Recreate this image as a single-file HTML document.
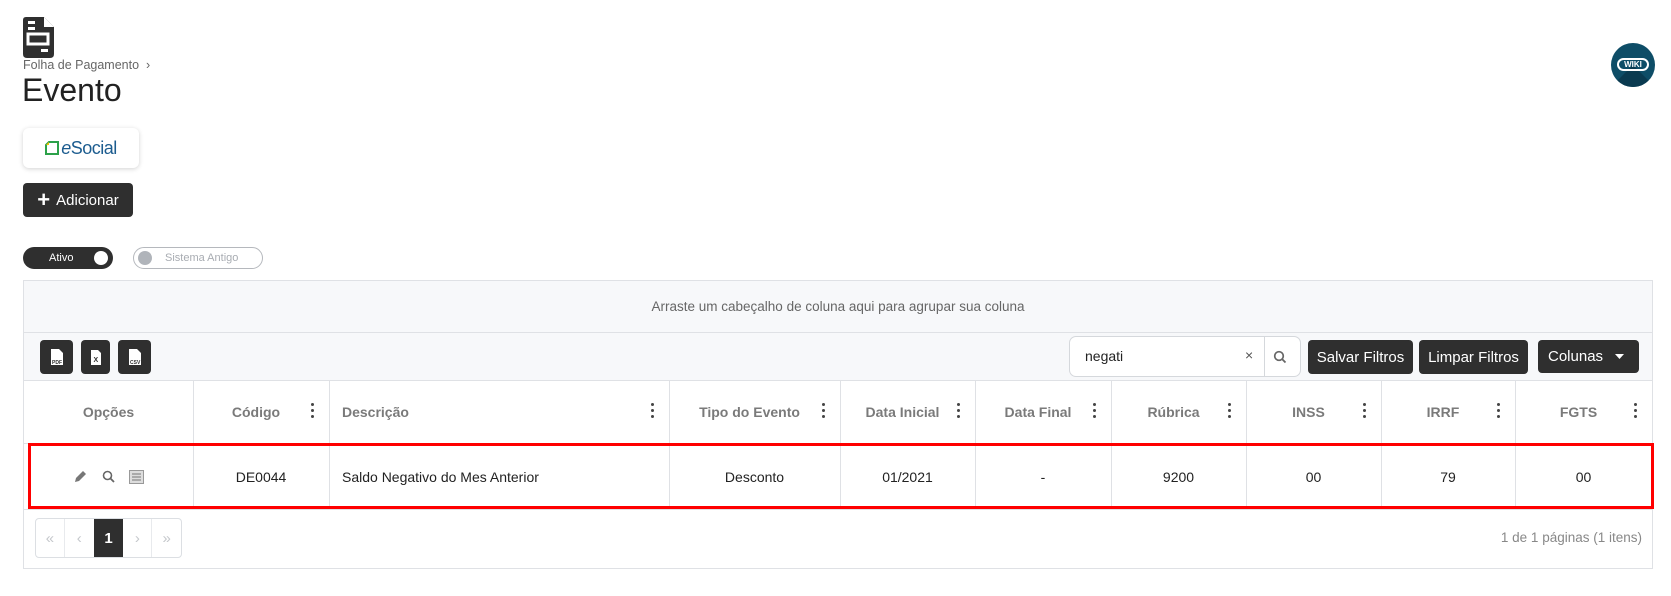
<!DOCTYPE html>
<html><head><meta charset="utf-8"><style>
*{box-sizing:border-box;margin:0;padding:0}
body{width:1671px;height:596px;background:#fff;font-family:"Liberation Sans",Arial,sans-serif;position:relative;overflow:hidden;color:#222}
.abs{position:absolute}
.btn{position:absolute;background:#2f2f2f;color:#fff;border-radius:4px;font-size:15px;display:flex;align-items:center;justify-content:center}
.grid{position:absolute;left:23px;top:280px;width:1630px;height:289px;border:1px solid #dfe1e5}
.hline{position:absolute;left:0;right:0;height:1px;background:#dfe1e5}
.vline{position:absolute;width:1px;background:#dfe1e5;top:99px;height:130px}
.hd{position:absolute;top:100px;height:62px;display:flex;align-items:center;font-size:14px;font-weight:bold;color:#7a7a7a}
.kb{position:absolute;right:14px;top:22px;width:4px;height:16px}
.kb i{display:block;width:3px;height:3px;background:#444;border-radius:50%;margin:0 0 3px 0}
.dc{position:absolute;top:163px;height:65px;display:flex;align-items:center;justify-content:center;font-size:14px;color:#222}
</style></head><body>
<!-- doc icon -->
<svg class="abs" style="left:23px;top:17px" width="31" height="41" viewBox="0 0 31 41">
<path d="M3 0H21L31 10V37Q31 41 27 41H4Q0 41 0 37V3Q0 0 3 0Z" fill="#2f2f2f"/>
<path d="M21 0V10H31Z" fill="#fff"/>
<rect x="5" y="4" width="7" height="3" fill="#fff"/><rect x="5" y="10" width="7" height="3" fill="#fff"/>
<rect x="5" y="17" width="20" height="10" fill="none" stroke="#fff" stroke-width="3"/>
<rect x="18" y="32" width="7" height="3" fill="#fff"/>
</svg>
<div class="abs" style="left:23px;top:58px;font-size:12.5px;color:#666">Folha de Pagamento &nbsp;›</div>
<div class="abs" style="left:22px;top:72px;font-size:32px;color:#222">Evento</div>
<!-- wiki -->
<div class="abs" style="left:1611px;top:43px;width:44px;height:44px;border-radius:50%;background:#0e4d67;overflow:hidden">
<div class="abs" style="left:22px;top:22px;width:40px;height:40px;background:#0a3a50;transform:rotate(45deg);transform-origin:0 0"></div>
<div class="abs" style="left:6px;top:15px;width:32px;height:13px;border:2px solid #fff;border-radius:7px;color:#fff;font-size:8px;font-weight:bold;text-align:center;line-height:9px">WIKI</div>
</div>
<!-- esocial -->
<div class="abs" style="left:23px;top:128px;width:116px;height:40px;border-radius:6px;box-shadow:0 1px 5px rgba(0,0,0,.18);display:flex;align-items:center;justify-content:center">
<svg width="14" height="14" viewBox="0 0 14 14" style="margin-right:2px"><path d="M1 4L4 1H13V13H1Z" fill="none" stroke="#2ca14a" stroke-width="2"/><path d="M1 4L4 1V4Z" fill="#f5c400"/></svg>
<span style="font-size:18px;color:#1c5c8f;letter-spacing:-0.5px"><i>e</i>Social</span></div>
<div class="btn" style="left:23px;top:183px;width:110px;height:34px;font-size:15px"><span style="font-size:22px;font-weight:bold;margin-right:6px;line-height:1">+</span>Adicionar</div>
<!-- toggles -->
<div class="abs" style="left:23px;top:247px;width:90px;height:22px;border-radius:11px;background:#2f2f2f;color:#fff;font-size:11px;line-height:22px;padding-left:26px">Ativo<div class="abs" style="right:5px;top:4px;width:14px;height:14px;border-radius:50%;background:#fff"></div></div>
<div class="abs" style="left:133px;top:247px;width:130px;height:22px;border-radius:11px;border:1px solid #b5b8bd;color:#a8acb2;font-size:11px;line-height:20px;padding-left:31px">Sistema Antigo<div class="abs" style="left:4px;top:3px;width:14px;height:14px;border-radius:50%;background:#b0b4ba"></div></div>
<!-- grid -->
<div class="grid">
<div class="abs" style="left:0;top:0;width:1628px;height:99px;background:#f7f8fa"></div>
<div class="abs" style="left:0;top:0;width:1628px;height:51px;display:flex;align-items:center;justify-content:center;font-size:13.5px;color:#666">Arraste um cabeçalho de coluna aqui para agrupar sua coluna</div>
<div class="hline" style="top:51px"></div>
<div class="hline" style="top:99px"></div>
<div class="hline" style="top:162px"></div>
<div class="hline" style="top:228px"></div>
<!-- export -->
<div class="btn" style="left:16px;top:59px;width:33px;height:34px"><svg width="14" height="18"><path d="M1 1H9L13 5V17H1Z" fill="#fff"/><text x="2" y="16" font-size="5" fill="#2f2f2f" font-weight="bold">PDF</text></svg></div>
<div class="btn" style="left:57px;top:59px;width:29px;height:34px"><svg width="12" height="17"><path d="M1 1H8L11 4V16H1Z" fill="#fff"/><text x="3.5" y="13" font-size="7" fill="#2f2f2f" font-weight="bold">X</text></svg></div>
<div class="btn" style="left:94px;top:59px;width:33px;height:34px"><svg width="14" height="18"><path d="M1 1H9L13 5V17H1Z" fill="#fff"/><text x="2" y="16" font-size="5" fill="#2f2f2f" font-weight="bold">CSV</text></svg></div>
<!-- search -->
<div class="abs" style="left:1045px;top:55px;width:232px;height:41px;border:1px solid #d5d8dc;border-radius:7px;background:#fff">
<span class="abs" style="left:15px;top:11px;font-size:14px;color:#222">negati</span>
<span class="abs" style="left:175px;top:10px;font-size:14px;color:#555">×</span>
<div class="abs" style="left:194px;top:0;width:1px;height:39px;background:#d5d8dc"></div>
<svg class="abs" style="left:203px;top:13px" width="14" height="14"><circle cx="6" cy="6" r="4.3" fill="none" stroke="#666" stroke-width="1.7"/><path d="M9 9L12.5 12.5" stroke="#666" stroke-width="1.8"/></svg>
</div>
<div class="btn" style="left:1284px;top:59px;width:105px;height:34px">Salvar Filtros</div>
<div class="btn" style="left:1395px;top:59px;width:109px;height:34px">Limpar Filtros</div>
<div class="btn" style="left:1514px;top:59px;width:101px;height:33px;justify-content:flex-start;padding-left:10px">Colunas<svg class="abs" style="right:15px;top:14px" width="9" height="5"><path d="M0 0H9L4.5 5Z" fill="#fff"/></svg></div>
<!-- vlines -->
<div class="vline" style="left:169px"></div><div class="vline" style="left:305px"></div><div class="vline" style="left:645px"></div><div class="vline" style="left:816px"></div><div class="vline" style="left:951px"></div><div class="vline" style="left:1087px"></div><div class="vline" style="left:1222px"></div><div class="vline" style="left:1357px"></div><div class="vline" style="left:1491px"></div>
<!-- headers -->
<div class="hd" style="left:0;width:169px;justify-content:center">Opções</div>
<div class="hd" style="left:169px;width:136px;justify-content:center;padding-right:10px">Código<div class="kb"><i></i><i></i><i></i></div></div>
<div class="hd" style="left:305px;width:340px;padding-left:13px">Descrição<div class="kb"><i></i><i></i><i></i></div></div>
<div class="hd" style="left:645px;width:171px;justify-content:center;padding-right:10px">Tipo do Evento<div class="kb"><i></i><i></i><i></i></div></div>
<div class="hd" style="left:816px;width:135px;justify-content:center;padding-right:10px">Data Inicial<div class="kb"><i></i><i></i><i></i></div></div>
<div class="hd" style="left:951px;width:136px;justify-content:center;padding-right:10px">Data Final<div class="kb"><i></i><i></i><i></i></div></div>
<div class="hd" style="left:1087px;width:135px;justify-content:center;padding-right:10px">Rúbrica<div class="kb"><i></i><i></i><i></i></div></div>
<div class="hd" style="left:1222px;width:135px;justify-content:center;padding-right:10px">INSS<div class="kb"><i></i><i></i><i></i></div></div>
<div class="hd" style="left:1357px;width:134px;justify-content:center;padding-right:10px">IRRF<div class="kb"><i></i><i></i><i></i></div></div>
<div class="hd" style="left:1491px;width:137px;justify-content:center;padding-right:10px">FGTS<div class="kb"><i></i><i></i><i></i></div></div>
<!-- data -->
<div class="dc" style="left:0;width:169px;gap:14px">
<svg width="15" height="15"><path d="M2 13L3 9L10 2L13 5L6 12Z" fill="#777"/></svg>
<svg width="13" height="13"><circle cx="5.5" cy="5.5" r="4" fill="none" stroke="#666" stroke-width="1.6"/><path d="M8.5 8.5L12 12" stroke="#666" stroke-width="1.8"/></svg>
<svg width="15" height="14"><rect x="0.5" y="0.5" width="14" height="13" fill="#ddd" stroke="#999"/><path d="M3 4H12M3 7H12M3 10H12" stroke="#777"/></svg></div>
<div class="dc" style="left:169px;width:136px">DE0044</div>
<div class="dc" style="left:305px;width:340px;justify-content:flex-start;padding-left:13px">Saldo Negativo do Mes Anterior</div>
<div class="dc" style="left:645px;width:171px">Desconto</div>
<div class="dc" style="left:816px;width:135px">01/2021</div>
<div class="dc" style="left:951px;width:136px">-</div>
<div class="dc" style="left:1087px;width:135px">9200</div>
<div class="dc" style="left:1222px;width:135px">00</div>
<div class="dc" style="left:1357px;width:134px">79</div>
<div class="dc" style="left:1491px;width:137px">00</div>
<!-- pagination -->
<div class="abs" style="left:11px;top:237px;width:147px;height:40px;border:1px solid #dcdfe3;border-radius:4px;display:flex;color:#c5c8cc;font-size:15px">
<div style="width:29px;display:flex;align-items:center;justify-content:center;border-right:1px solid #e8eaed">«</div>
<div style="width:29px;display:flex;align-items:center;justify-content:center">‹</div>
<div style="width:30px;display:flex;align-items:center;justify-content:center;background:#2f2f2f;color:#fff;font-weight:bold">1</div>
<div style="width:29px;display:flex;align-items:center;justify-content:center;border-right:1px solid #e8eaed">›</div>
<div style="width:29px;display:flex;align-items:center;justify-content:center">»</div>
</div>
<div class="abs" style="right:10px;top:249px;font-size:13.5px;color:#888">1 de 1 páginas (1 itens)</div>
</div>
<!-- red highlight -->
<div class="abs" style="left:28px;top:443px;width:1626px;height:66px;border:3px solid #f00"></div>
</body></html>
